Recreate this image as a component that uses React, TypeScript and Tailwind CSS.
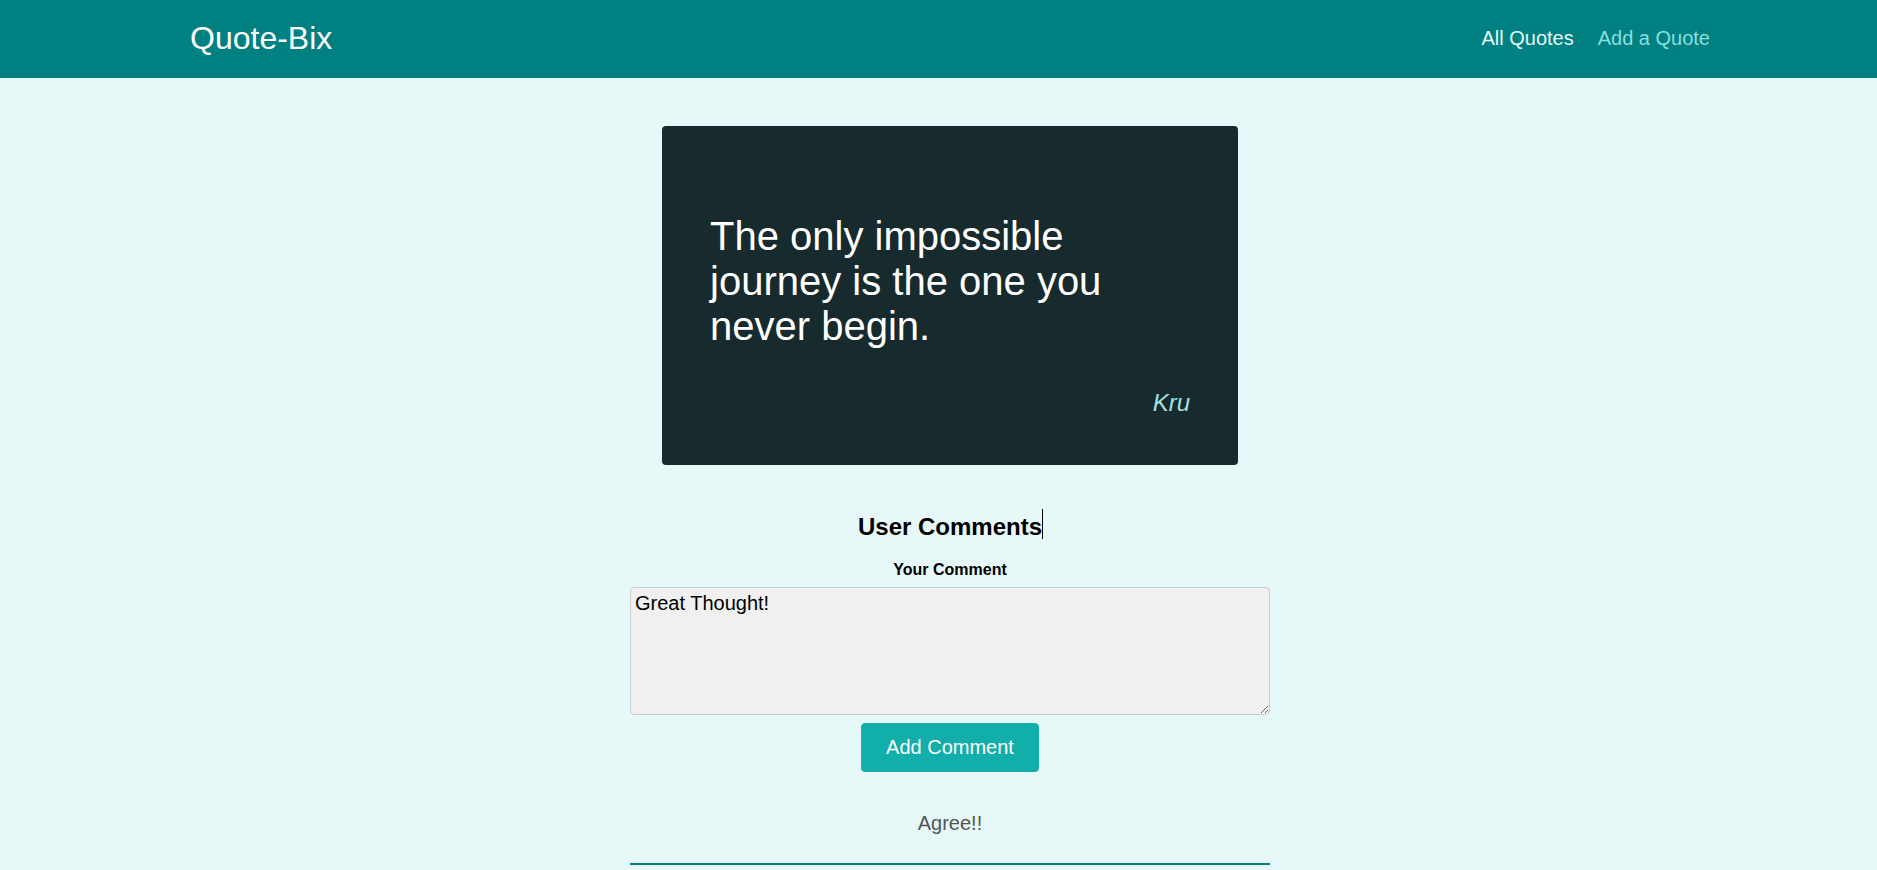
import React from "react";

export default function App() {
  return (
    <div
      className="h-screen w-full overflow-hidden bg-[#e6f8f8] leading-[normal]"
      style={{ fontFamily: '"Liberation Sans", Arial, sans-serif' }}
    >
      <div className="w-[1900px]">
        <header className="h-[78px] bg-[#008080] flex items-center justify-between px-[190px] pb-[2px]">
          <div className="text-[32px] leading-[normal] text-white">Quote-Bix</div>
          <nav>
            <ul className="flex items-baseline gap-6 text-[20px] leading-[normal]">
              <li className="text-[#e6fcfc]">All Quotes</li>
              <li className="text-[#88dfdf]">Add a Quote</li>
            </ul>
          </nav>
        </header>

        <main className="flex flex-col items-center">
          <figure className="mt-[48px] w-[576px] rounded-[4px] bg-[#172a2d] px-[48px] pt-[48px] pb-[48px]">
            <p className="mt-[40px] mb-[40px] text-[40px] leading-[45px] text-white">
              The only impossible journey is the one you never begin.
            </p>
            <figcaption className="text-right text-[24px] leading-[normal] italic text-[#a1e1e1]">
              Kru
            </figcaption>
          </figure>

          <section className="mt-[48px] flex flex-col items-center">
            <h2 className="relative text-[24px] leading-[normal] font-bold text-black">
              User Comments
              <span className="absolute right-[-1px] top-[-4px] h-[30px] w-px bg-black" />
            </h2>
            <label className="mt-[20px] text-[16px] leading-[normal] font-bold text-black">
              Your Comment
            </label>
            <textarea
              className="mt-[8px] block h-[128px] w-[640px] rounded-[4px] border border-[#c9cccc] bg-[#f0f0f0] p-1 text-[20px] leading-[normal] text-black outline-none"
              style={{ fontFamily: '"Liberation Sans", Arial, sans-serif' }}
              defaultValue="Great Thought!"
            />
            <button className="mt-[8px] rounded-[4px] border border-[#12aeaa] bg-[#12aeaa] px-6 py-3 text-[20px] leading-[23px] text-white">
              Add Comment
            </button>
            <ul className="mt-[40px] w-[640px]">
              <li className="border-b-2 border-[#008080] pb-[28px] text-center text-[20px] leading-[normal] text-[#555555]">
                Agree!!
              </li>
            </ul>
          </section>
        </main>
      </div>
    </div>
  );
}
